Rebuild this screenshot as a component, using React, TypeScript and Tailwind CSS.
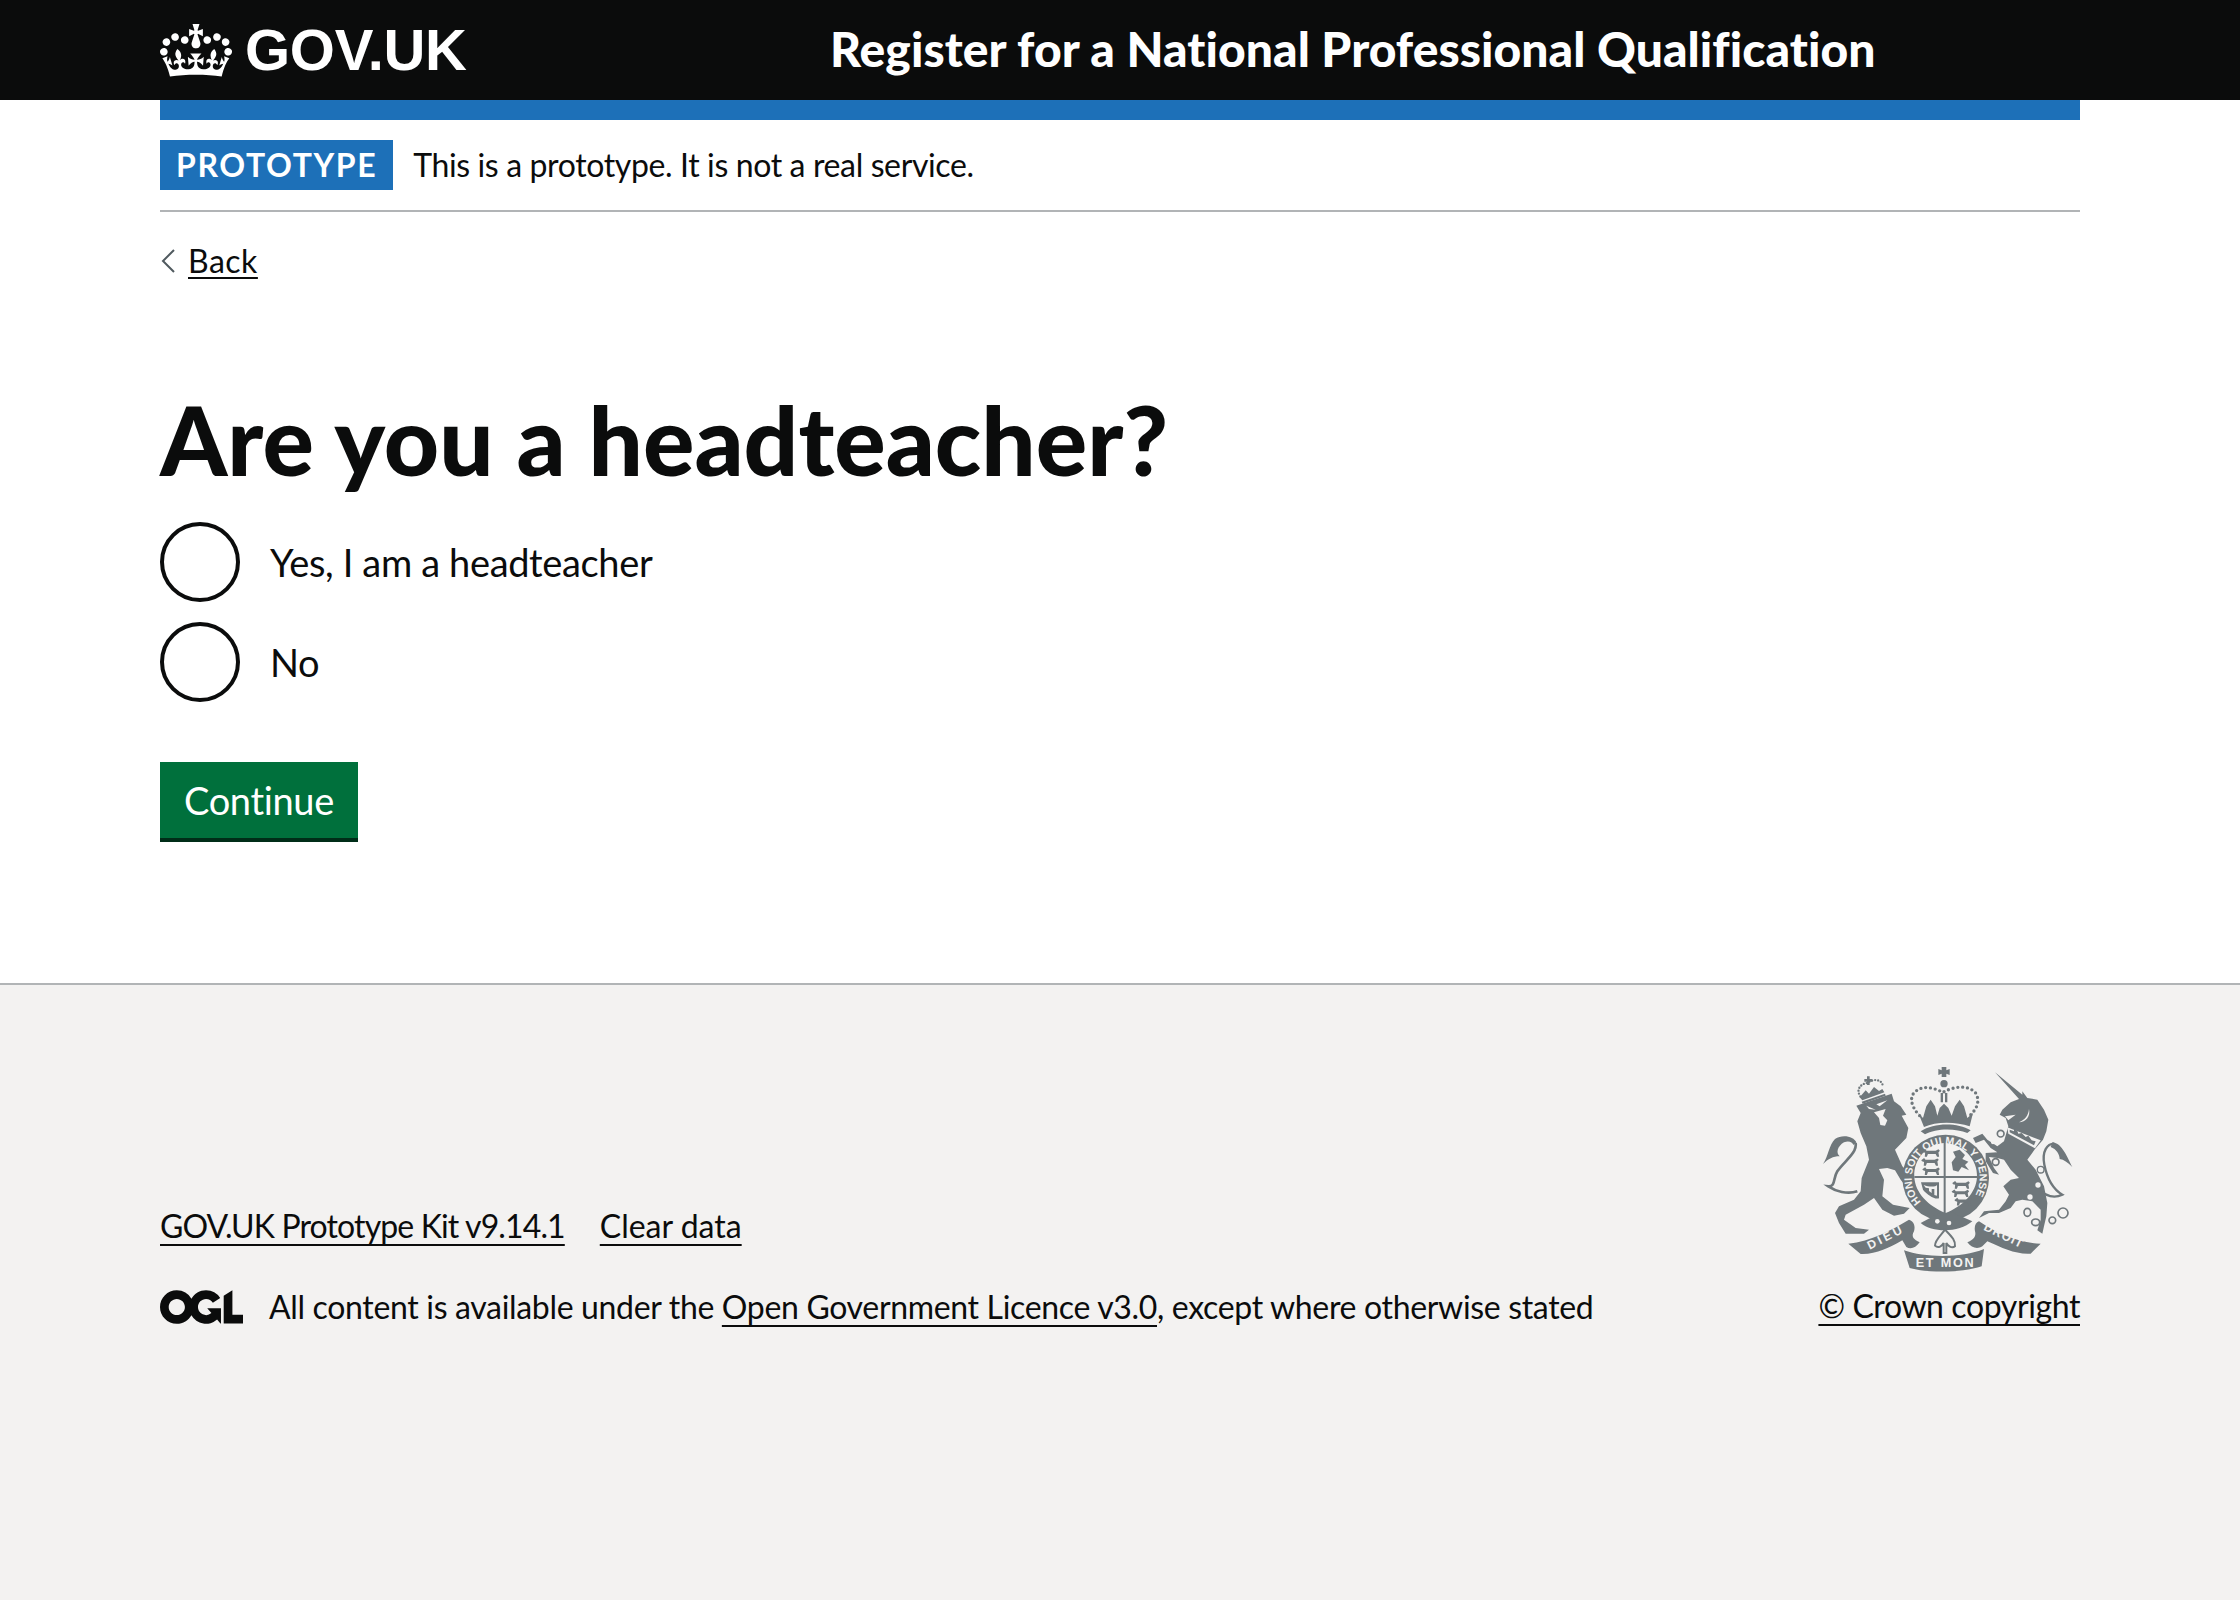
import React from 'react';

const CROWN =
  'M25 30.2c3.5 1.5 7.7-.2 9.1-3.7 1.5-3.6-.2-7.8-3.9-9.2-3.6-1.4-7.6.3-9.1 3.9-1.4 3.5.3 7.5 3.9 9zM9 39.5c3.6 1.5 7.8-.2 9.2-3.7 1.5-3.6-.2-7.8-3.9-9.1-3.6-1.5-7.6.2-9.1 3.8-1.4 3.5.3 7.5 3.8 9zM4.4 57.2c3.5 1.5 7.7-.2 9.1-3.8 1.5-3.6-.2-7.7-3.9-9.1-3.5-1.5-7.6.3-9.1 3.8-1.4 3.5.3 7.6 3.9 9.1zm38.3-21.4c3.5 1.5 7.7-.2 9.1-3.8 1.5-3.6-.2-7.7-3.9-9.1-3.6-1.5-7.6.3-9.1 3.8-1.3 3.6.4 7.7 3.9 9.1zm64.4-5.6c-3.6 1.5-7.8-.2-9.1-3.7-1.5-3.6.2-7.8 3.8-9.2 3.6-1.4 7.7.3 9.2 3.9 1.3 3.5-.4 7.5-3.9 9zm15.9 9.3c-3.6 1.5-7.7-.2-9.1-3.7-1.5-3.6.2-7.8 3.7-9.1 3.6-1.5 7.7.2 9.2 3.8 1.5 3.5-.3 7.5-3.8 9zm4.7 17.7c-3.6 1.5-7.8-.2-9.2-3.8-1.5-3.6.2-7.7 3.9-9.1 3.6-1.5 7.7.3 9.2 3.8 1.3 3.5-.4 7.6-3.9 9.1zM89.3 35.8c-3.6 1.5-7.8-.2-9.2-3.8-1.4-3.6.2-7.7 3.9-9.1 3.6-1.5 7.7.3 9.2 3.8 1.4 3.6-.3 7.7-3.9 9.1zM69.7 17.7l8.9 4.7V9.3l-8.9 2.8c-.2-.3-.5-.6-.9-.9L72.4 0H59.6l3.5 11.2c-.3.3-.6.5-.9.9l-8.8-2.8v13.1l8.8-4.7c.3.3.6.7.9.9l-5 15.4v.1c-.2.8-.4 1.6-.4 2.4 0 4.1 3.1 7.5 7 8.1h.2c.3 0 .7.1 1 .1.4 0 .7 0 1-.1h.2c4-.6 7.1-4.1 7.1-8.1 0-.8-.1-1.7-.4-2.4V34l-5.1-15.4c.4-.2.7-.6 1-.9zM66 92.8c16.9 0 32.8 1.1 47.1 3.2 4-16.9 8.9-26.7 14-33.5l-9.6-3.4c1 4.9 1.1 7.2 0 10.2-1.5-1.4-3-4.3-4.2-8.7L108.6 76c2.8-2 5-3.2 7.5-3.3-4.4 9.4-10 11.9-13.6 11.2-4.3-.8-6.3-4.6-5.6-7.9 1-4.7 5.7-5.9 8-.5 4.3-8.7-3-11.4-7.6-8.8 7.1-7.2 7.9-13.5 2.1-21.1-8 6.1-8.1 12.3-4.5 20.8-4.7-5.4-12.1-2.5-9.5 6.2 3.4-5.2 7.9-2 7.2 3.1-.6 4.3-6.4 7.8-13.5 7.2-10.3-.9-10.9-8-11.2-13.8 2.5-.5 7.1 1.8 11 7.3L80.2 60c-4.1 4.4-8 5.3-12.3 5.4 1.4-4.4 8-11.6 8-11.6H55.5s6.4 7.2 7.9 11.6c-4.2-.1-8-1-12.3-5.4l1.4 16.4c3.9-5.5 8.5-7.7 10.9-7.3-.3 5.8-.9 12.8-11.1 13.8-7.2.6-12.9-2.9-13.5-7.2-.7-5 3.8-8.3 7.1-3.1 2.7-8.7-4.6-11.6-9.4-6.2 3.7-8.5 3.6-14.7-4.6-20.8-5.8 7.6-5 13.9 2.2 21.1-4.7-2.6-11.9.1-7.7 8.8 2.3-5.5 7.1-4.2 8.1.5.7 3.3-1.3 7.1-5.7 7.9-3.5.7-9-1.8-13.5-11.2 2.5.1 4.7 1.3 7.5 3.3l-4.7-15.4c-1.2 4.4-2.7 7.2-4.3 8.7-1.1-3-.9-5.3 0-10.2l-9.5 3.4c5 6.9 9.9 16.7 14 33.5 14.8-2.1 30.8-3.2 47.7-3.2z';

const OGL =
  'M421.5 142.8V.1l-50.7 32.3v161.1h112.4v-50.7zm-122.3-9.6A47.12 47.12 0 0 1 221 97.8c0-26 21.1-47.1 47.1-47.1 16.7 0 31.4 8.7 39.7 21.8l42.7-27.2A97.63 97.63 0 0 0 268.1 0c-36.5 0-68.3 20.1-85.1 49.7A98 98 0 0 0 97.8 0C43.9 0 0 43.9 0 97.8s43.9 97.8 97.8 97.8c36.5 0 68.3-20.1 85.1-49.7a97.76 97.76 0 0 0 149.6 25.4l19.4 22.2h3v-87.8h-80l24.3 27.5zM97.8 145c-26 0-47.1-21.1-47.1-47.1s21.1-47.1 47.1-47.1 47.2 21 47.2 47S123.8 145 97.8 145';

const linkClass = 'underline decoration-2 underline-offset-[6px]';
const ARMS = '#6f777b';
const PAPER = '#f3f2f1';
const armsFont = "'Liberation Sans',sans-serif";

// small passant lion used in the shield quarters
const Leopard = ({ x, y }: { x: number; y: number }) => (
  <path transform={`translate(${x} ${y})`} d="M0 6l8-6 4 5h26l8-4 4 4-4 5 2 12h-6l-4-8H16l-3 8H7l1-11-6-2z" />
);

// simplified royal arms, drawn in the coordinates of the 900px zoomed crop
const RoyalArms = () => (
  <svg viewBox="60 30 780 630" className="w-[260px] h-[210px] block" fill={ARMS}>
    {/* lion */}
    <g transform="translate(60 30)">
      <path d="M112 128 L218 92 L225 115 L245 130 L262 155 L248 158 L268 195 L262 225 L228 260 L250 310 L283 345 L280 375 L262 372 L245 350 L228 322 L205 315 L180 318 L195 350 L190 400 L222 425 L272 435 L255 452 L225 458 L190 440 L165 405 L135 425 L80 455 L75 470 L110 495 L150 500 L135 512 L80 512 L60 480 L48 450 L60 430 L105 410 L125 385 L128 345 L150 290 L142 250 L125 210 L115 175 L125 150 Z" />
      <path d="M115 385 C85 395 50 385 28 370 C50 372 42 345 55 325 C75 295 115 270 110 240" fill="none" stroke={ARMS} strokeWidth="8" />
      <path d="M112 238 C105 220 70 212 48 228 C30 245 28 280 12 303 C28 288 42 280 62 280 C50 270 55 250 75 238 C90 232 100 238 104 246 Z" />
      <path d="M142 128 L170 140 L150 138 Z M172 124 L205 112 L182 130 Z M165 148 L200 138 L192 158 L205 172 L198 188 L184 186 L180 165 Z" fill={PAPER} />
      <path d="M124 100 C110 80 125 62 145 60 C160 48 190 45 192 72" fill="none" stroke={ARMS} strokeWidth="7" strokeLinecap="round" strokeDasharray="0 9" />
      <path d="M144 40h8v8h8v8h-8v10h-8v-10h-8v-8h8z" />
      <path d="M122 103 L140 82 L150 92 L165 72 L180 84 L190 78 L196 88 L130 112 Z" />
      <path d="M128 116 L198 92 L200 98 L131 122 Z" />
    </g>
    {/* unicorn */}
    <g transform="translate(510 30)">
      <path d="M78 28 L160 95 L160 85 L175 105 L205 110 L225 140 L238 170 L232 205 L222 230 L198 258 L175 290 L200 320 L225 370 L235 420 L232 460 L225 490 L220 512 L205 502 L215 470 L215 440 L190 415 L160 410 L140 415 L125 435 L90 450 L60 450 L30 465 L45 445 L90 440 L110 415 L120 395 L103 370 L125 350 L150 345 L125 320 L105 290 L85 285 L60 282 L75 315 L90 335 L72 330 L50 295 L50 270 L85 268 L65 255 L45 230 L20 240 L12 225 L40 212 L55 230 L85 250 L105 235 L118 190 L110 165 L92 155 L100 140 L125 118 L150 108 Z" />
      <path d="M205 375 C225 395 250 410 280 395 C255 380 235 350 226 305 C218 265 235 242 255 242" fill="none" stroke={ARMS} strokeWidth="7" />
      <path d="M250 238 C280 240 295 285 310 312 C295 298 285 290 272 288 C272 275 262 258 245 252 Z" />
      <path d="M108 160 L140 155 L118 172 Z M180 138 C178 158 168 170 150 178 C170 178 185 160 180 138 Z" fill={PAPER} />
      <path d="M115 193 L215 232 L198 256 L118 212 Z" fill={PAPER} />
      <path d="M122 200 L135 205 L135 198 L145 204 L148 212 L158 210 L170 222 L178 218 L188 232 L200 235 L195 247 L122 208 Z" />
      <circle cx="95" cy="212" r="10" fill={PAPER} stroke={ARMS} strokeWidth="5" />
      <circle cx="80" cy="297" r="10" fill={PAPER} stroke={ARMS} strokeWidth="5" />
      <circle cx="72" cy="238" r="6" fill={PAPER} />
      <circle cx="215" cy="320" r="10" fill={PAPER} stroke={ARMS} strokeWidth="4" />
      <circle cx="207" cy="366" r="8" fill={PAPER} />
      <circle cx="183" cy="402" r="8" fill={PAPER} />
      <g fill="none" stroke={ARMS} strokeWidth="5">
        <ellipse cx="175" cy="448" rx="10" ry="12" />
        <ellipse cx="200" cy="478" rx="12" ry="10" />
        <circle cx="250" cy="472" r="10" />
        <circle cx="282" cy="450" r="15" />
      </g>
    </g>
    {/* main crown */}
    <g transform="translate(300 30)">
      <path d="M128 12h14v10l10-4v18l-10-4v10h-14v-10l-10 4V18l10 4z" />
      <circle cx="135" cy="62" r="11" />
      <path d="M125 90h7v28h-7zM138 90h7v28h-7z" />
      <path d="M62 158 C35 130 30 100 50 85 C75 65 105 75 132 88 C160 72 205 62 230 90 C245 115 232 140 212 158" fill="none" stroke={ARMS} strokeWidth="10" strokeLinecap="round" strokeDasharray="0 14.5" />
      <path d="M58 150 L72 165 L82 130 L95 110 L108 130 L115 158 L122 135 L135 122 L148 135 L158 158 L168 130 L182 110 L195 130 L205 165 L222 150 L212 190 C170 175 110 175 75 192 Z" />
      <path d="M65 205 C105 178 175 178 215 202 L205 210 C170 195 110 195 78 214 Z" />
    </g>
    {/* garter and shield */}
    <circle cx="440" cy="375" r="130" />
    <path d="M365 510 C400 540 480 540 520 505 L440 470 Z" />
    <path id="garterRing" d="M370 450 A102 102 0 1 1 510 450" fill="none" />
    <text fontFamily={armsFont} fontWeight="700" fontSize="32" fill={PAPER}>
      <textPath href="#garterRing" startOffset="1%" textLength="450">HONI SOIT QUI MAL Y PENSE</textPath>
    </text>
    <path d="M346 372 C343 318 385 272 437 270 C490 272 537 318 534 372 C532 420 490 460 440 480 C390 460 348 420 346 372 Z" fill={PAPER} />
    <path d="M434 270h6v210h-6zM346 369h188v6H346z" />
    <g transform="translate(370 288) scale(1.05)"><Leopard x={0} y={0} /><Leopard x={-3} y={26} /><Leopard x={0} y={52} /></g>
    <g transform="translate(460 384) scale(1.05)"><Leopard x={0} y={0} /><Leopard x={-2} y={24} /><Leopard x={6} y={48} /></g>
    <path d="M462 352 L458 328 L470 312 L462 296 L482 290 L498 306 L490 318 L508 326 L498 336 L510 352 L488 342 L478 356 Z" />
    <path d="M366 388 H420 V436 C405 440 385 425 372 410 Z" />
    <path d="M374 396 C390 402 410 402 414 396 L414 428 L406 426 L406 408 L398 408 L398 420 L390 414 L390 406 L380 404Z" fill={PAPER} />
    <circle cx="415" cy="505" r="7" fill={PAPER} />
    <circle cx="450" cy="510" r="7" fill={PAPER} />
    {/* fleur-de-lis */}
    <path d="M438 530 C455 548 470 560 468 580 C458 588 446 578 442 570 L442 600 L434 600 L434 570 C430 578 418 588 408 578 C408 560 425 548 438 530 Z" fill="none" stroke={ARMS} strokeWidth="6" />
    {/* motto ribbons */}
    <path d="M148 572 C215 565 280 530 330 500 C345 505 350 520 345 535 C335 552 345 560 362 568 C350 585 335 590 322 582 L310 562 C270 585 230 605 185 603 Z" />
    <path d="M725 572 C660 570 590 540 540 505 C530 508 525 520 528 535 C532 550 525 560 505 568 C518 585 535 590 550 580 L565 565 C610 585 650 605 695 602 Z" />
    <path d="M315 592 C380 615 490 615 555 588 L548 640 C490 660 385 660 332 645 Z" />
    <text x="212" y="590" transform="rotate(-27 212 590)" fontFamily={armsFont} fontWeight="700" fontSize="36" textLength="112" fill={PAPER}>DIEU</text>
    <text x="350" y="643" fontFamily={armsFont} fontWeight="700" fontSize="38" textLength="174" fill={PAPER}>ET MON</text>
    <text x="552" y="530" transform="rotate(26 552 530)" fontFamily={armsFont} fontWeight="700" fontSize="36" textLength="125" fill={PAPER}>DROIT</text>
  </svg>
);

const Radio = ({ label }: { label: string }) => (
  <label className="flex items-center h-[80px]">
    <span className="w-[80px] h-[80px] rounded-full border-4 border-[#0b0c0c] bg-white shrink-0" />
    <span className="ml-[30px] text-[38px] leading-none tracking-[-0.35px]">{label}</span>
  </label>
);

export default function App() {
  return (
    <div className="min-h-[1600px] flex flex-col bg-white text-[#0b0c0c] font-['Lato',sans-serif]">
      <header className="h-[100px] bg-[#0b0c0c] text-white flex items-center pl-[160px]">
        <div className="w-[670px] flex items-center shrink-0">
          <svg viewBox="0 0 132 97" className="w-[72px] h-[53px] mr-[13px]" fill="currentColor">
            <path fillRule="evenodd" d={CROWN} />
          </svg>
          <span className="font-['Liberation_Sans',sans-serif] font-bold text-[58px] leading-none tracking-[-0.3px]">GOV.UK</span>
        </div>
        <span className="font-black text-[48px] leading-none tracking-[0.05px] -mt-[2px]">Register for a National Professional Qualification</span>
      </header>

      <main className="mx-[160px] flex-1">
        <div className="h-[20px] bg-[#1d70b8]" />
        <div className="flex items-center h-[92px] border-b-2 border-[#b1b4b6]">
          <strong className="h-[50px] flex items-center px-[16px] bg-[#1d70b8] text-white text-[32px] font-bold tracking-[1.6px] leading-none">PROTOTYPE</strong>
          <span className="ml-[20px] text-[32px] leading-none tracking-[-0.37px]">This is a prototype. It is not a real service.</span>
        </div>

        <a className="mt-[29px] flex items-center h-[40px] w-fit">
          <svg viewBox="0 0 14 24" className="w-[14px] h-[24px] ml-[1px] mr-[13px]" fill="none" stroke="#505a5f" strokeWidth="2">
            <path d="M13 1 L2 12 L13 23" />
          </svg>
          <span className="text-[32px] leading-none tracking-[0.5px] underline decoration-2 underline-offset-[4px]">Back</span>
        </a>

        <h1 className="mt-[108px] text-[96px] font-black leading-[100px] tracking-[0.02px]">Are you a headteacher?</h1>

        <div className="mt-[33px] flex flex-col gap-[20px]">
          <Radio label="Yes, I am a headteacher" />
          <Radio label="No" />
        </div>

        <button className="mt-[60px] block h-[76px] px-[24px] bg-[#00703c] text-white text-[38px] leading-none tracking-[-0.35px] shadow-[0_4px_0_#002d18]">Continue</button>
      </main>

      <footer className="h-[617px] shrink-0 bg-[#f3f2f1] border-t-2 border-[#b1b4b6] px-[160px] pt-[78px]">
        <div className="flex justify-between items-end">
          <div>
            <div className="flex gap-[35px] text-[32px] leading-none mb-[48px]">
              <a className={`tracking-[-0.87px] ${linkClass}`}>GOV.UK Prototype Kit v9.14.1</a>
              <a className={linkClass}>Clear data</a>
            </div>
            <div className="flex items-center">
              <svg viewBox="0 0 483.2 195.7" className="w-[83px] h-[34px] mr-[26px]" fill="currentColor">
                <path d={OGL} />
              </svg>
              <span className="text-[32px] leading-none tracking-[-0.33px]">
                All content is available under the <a className={linkClass}>Open Government Licence v3.0</a>, except where otherwise stated
              </span>
            </div>
          </div>
          <div className="flex flex-col items-center">
            <RoyalArms />
            <a className={`mt-[17px] mb-[2px] text-[32px] leading-none tracking-[-0.4px] ${linkClass}`}>© Crown copyright</a>
          </div>
        </div>
      </footer>
    </div>
  );
}
